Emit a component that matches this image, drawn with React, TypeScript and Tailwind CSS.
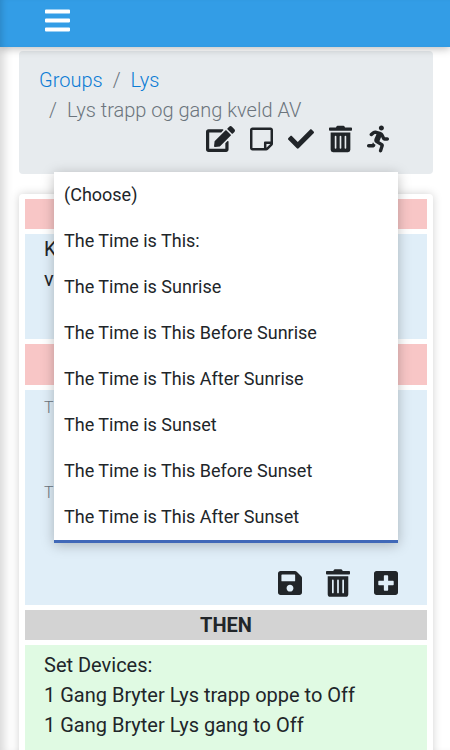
import { useState } from "react";
import {
  FaBars,
  FaCheck,
  FaEdit,
  FaPlusSquare,
  FaRegStickyNote,
  FaRunning,
  FaSave,
  FaTrashAlt,
} from "react-icons/fa";

const timeOptions = [
  "(Choose)",
  "The Time is This:",
  "The Time is Sunrise",
  "The Time is This Before Sunrise",
  "The Time is This After Sunrise",
  "The Time is Sunset",
  "The Time is This Before Sunset",
  "The Time is This After Sunset",
];

const groupActions = [
  { name: "Edit", icon: FaEdit, size: "w-[29px] h-7" },
  { name: "Note", icon: FaRegStickyNote, size: "w-[23px] h-7" },
  { name: "Enable", icon: FaCheck, size: "w-[26px] h-7" },
  { name: "Delete", icon: FaTrashAlt, size: "w-[23px] h-7" },
  { name: "Run", icon: FaRunning, size: "w-[22px] h-7" },
];

const conditionActions = [
  { name: "Save condition", icon: FaSave },
  { name: "Delete condition", icon: FaTrashAlt },
  { name: "Add condition", icon: FaPlusSquare },
];

const Header = () => (
  <header className="relative z-20 flex h-[47px] items-start bg-[#339de6] px-[45px] pt-[6px] shadow-[0_2px_8px_rgba(0,0,0,0.25),inset_6px_0_6px_-4px_rgba(0,0,0,0.15)]">
    <button aria-label="Open menu" className="text-white">
      <FaBars className="h-[29px] w-[25px]" />
    </button>
  </header>
);

const Breadcrumb = () => (
  <nav
    aria-label="Breadcrumb"
    className="rounded bg-[#e7ebee] px-5 pt-[14px] pb-[21px] font-light"
  >
    <ol className="leading-[30px] text-[#6c757d]">
      <li className="flex">
        <a href="#groups" className="text-[#0c7cd5]">
          Groups
        </a>
        <span className="px-[10px]">/</span>
        <a href="#lys" className="text-[#0c7cd5]">
          Lys
        </a>
      </li>
      <li className="flex">
        <span className="px-[10px]">/</span>
        <span>Lys trapp og gang kveld AV</span>
      </li>
    </ol>
    <div className="flex justify-end gap-[15px] pr-6">
      {groupActions.map((action) => {
        const Icon = action.icon;
        return (
          <button key={action.name} aria-label={action.name}>
            <Icon className={action.size} />
          </button>
        );
      })}
    </div>
  </nav>
);

const TimeMenu = () => {
  const [selected, setSelected] = useState(timeOptions[0]);

  return (
    <ul
      role="listbox"
      aria-label="Time"
      className="absolute inset-x-0 bottom-0 z-10 border-b-[3px] border-[#4169b8] bg-white text-lg text-[#212529] shadow-[0_2px_12px_rgba(0,0,0,0.25)]"
    >
      {timeOptions.map((option) => (
        <li key={option} role="option" aria-selected={option === selected}>
          <button
            onClick={() => setSelected(option)}
            className="h-[46px] w-full px-[10px] text-left"
          >
            {option}
          </button>
        </li>
      ))}
    </ul>
  );
};

export default function App() {
  return (
    <div className="h-screen overflow-hidden bg-white font-[Roboto,sans-serif] text-xl leading-[30px] text-[#212529] shadow-[inset_10px_0_10px_-6px_rgba(0,0,0,0.16)]">
      <Header />
      <main className="flex flex-col gap-5 pt-1 pr-[17px] pl-[19px]">
        <Breadcrumb />

        <div className="flex flex-col gap-[5px] rounded bg-white px-[6px] pt-[5px] pb-[5px] shadow-[0_0_10px_rgba(0,0,0,0.18)]">
          <div className="h-[30px] bg-[#f8c6c6]" />
          <div className="h-[105px] bg-[#e0eef8] px-[19px]">
            <p>K</p>
            <p>v</p>
          </div>
          <div className="h-[41px] bg-[#f8c6c6]" />

          <section className="bg-[#e0eef8] px-[19px] pt-[6px] pb-2">
            <p className="text-base leading-6 font-light text-[#6c757d]">T</p>
            <div className="relative mx-[10px] h-[123px]">
              <p className="-ml-[10px] pt-[61px] text-base leading-6 font-light text-[#6c757d]">
                T
              </p>
              <TimeMenu />
            </div>
            <div className="mr-[10px] flex justify-end gap-6 pt-[26px]">
              {conditionActions.map((action) => {
                const Icon = action.icon;
                return (
                  <button key={action.name} aria-label={action.name}>
                    <Icon className="h-7 w-6" />
                  </button>
                );
              })}
            </div>
          </section>

          <h2 className="bg-[#d3d3d3] text-center font-bold">THEN</h2>

          <section className="h-[130px] bg-[#e0fae3] px-[19px] pt-[5px]">
            <p>Set Devices:</p>
            <p>1 Gang Bryter Lys trapp oppe to Off</p>
            <p>1 Gang Bryter Lys gang to Off</p>
          </section>
        </div>
      </main>
    </div>
  );
}
